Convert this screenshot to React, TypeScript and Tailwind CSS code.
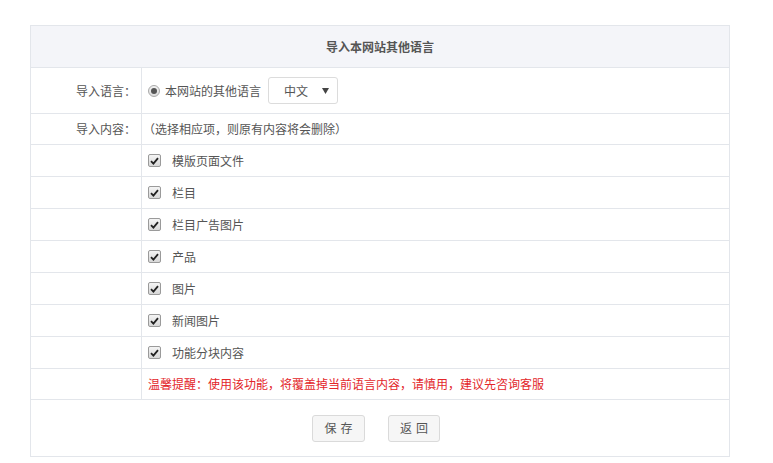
import React from 'react'

const items = ['模版页面文件', '栏目', '栏目广告图片', '产品', '图片', '新闻图片', '功能分块内容']

function Checkbox() {
  return (
    <span className="w-[13px] h-[13px] rounded-[2px] border border-[#9a9a9a] bg-gradient-to-b from-[#f4f4f4] to-[#d8d8d8] flex items-center justify-center">
      <svg width="9" height="8" viewBox="0 0 9 8">
        <path d="M1 4.2 L3.4 6.6 L8 1.2" fill="none" stroke="#222" strokeWidth="1.8" />
      </svg>
    </span>
  )
}

function Radio() {
  return (
    <span className="w-[12px] h-[12px] rounded-full border border-[#a9a9a9] bg-gradient-to-b from-[#f2f2f2] to-[#dcdcdc] flex items-center justify-center">
      <span className="w-[6px] h-[6px] rounded-full bg-[#555]" />
    </span>
  )
}

export default function App() {
  return (
    <div className="w-[773px] h-[463px] bg-white pt-[25px] text-[12px] text-[#555]" style={{ fontFamily: '"Noto Sans CJK SC", "Noto Sans", sans-serif' }}>
      <div className="ml-[30px] w-[700px] border border-[#e3e6eb]">
        {/* Header */}
        <div className="h-[42px] bg-[#f4f5f9] border-b border-[#e3e6eb] flex items-center justify-center font-bold">
          导入本网站其他语言
        </div>

        {/* Language */}
        <div className="h-[46px] flex border-b border-[#e3e6eb]">
          <div className="w-[111px] border-r border-[#e3e6eb] flex items-center justify-end pr-[5px]">导入语言：</div>
          <div className="flex-1 flex items-center pl-[6px]">
            <Radio />
            <span className="ml-[5px]">本网站的其他语言</span>
            <div className="ml-[7px] w-[70px] h-[27px] border border-[#dcdcdc] rounded-[3px] flex items-center pl-[15px] pr-[8px] justify-between">
              <span>中文</span>
              <svg width="7" height="6" viewBox="0 0 7 6">
                <path d="M0 0 H7 L3.5 6 Z" fill="#444" />
              </svg>
            </div>
          </div>
        </div>

        {/* Content */}
        <div className="h-[31px] flex border-b border-[#e3e6eb]">
          <div className="w-[111px] border-r border-[#e3e6eb] flex items-center justify-end pr-[5px]">导入内容：</div>
          <div className="flex-1 flex items-center pl-[1px]">（选择相应项，则原有内容将会删除）</div>
        </div>

        {items.map((item) => (
          <div key={item} className="h-[32px] flex border-b border-[#e3e6eb]">
            <div className="w-[111px] border-r border-[#e3e6eb]" />
            <div className="flex-1 flex items-center pl-[6px]">
              <Checkbox />
              <span className="ml-[11px]">{item}</span>
            </div>
          </div>
        ))}

        {/* Warning */}
        <div className="h-[31px] flex border-b border-[#e3e6eb]">
          <div className="w-[111px] border-r border-[#e3e6eb]" />
          <div className="flex-1 flex items-center pl-[6px] text-[#e3262a]">
            温馨提醒：使用该功能，将覆盖掉当前语言内容，请慎用，建议先咨询客服
          </div>
        </div>

        {/* Buttons */}
        <div className="h-[56px] flex items-center justify-center gap-[23px] pr-[8px]">
          <button className="w-[53px] h-[27px] bg-[#f6f6f6] border border-[#dadada] rounded-[3px] text-[#555] tracking-[4px] pl-[4px]">保存</button>
          <button className="w-[52px] h-[27px] bg-[#f6f6f6] border border-[#dadada] rounded-[3px] text-[#555] tracking-[4px] pl-[4px]">返回</button>
        </div>
      </div>
    </div>
  )
}
